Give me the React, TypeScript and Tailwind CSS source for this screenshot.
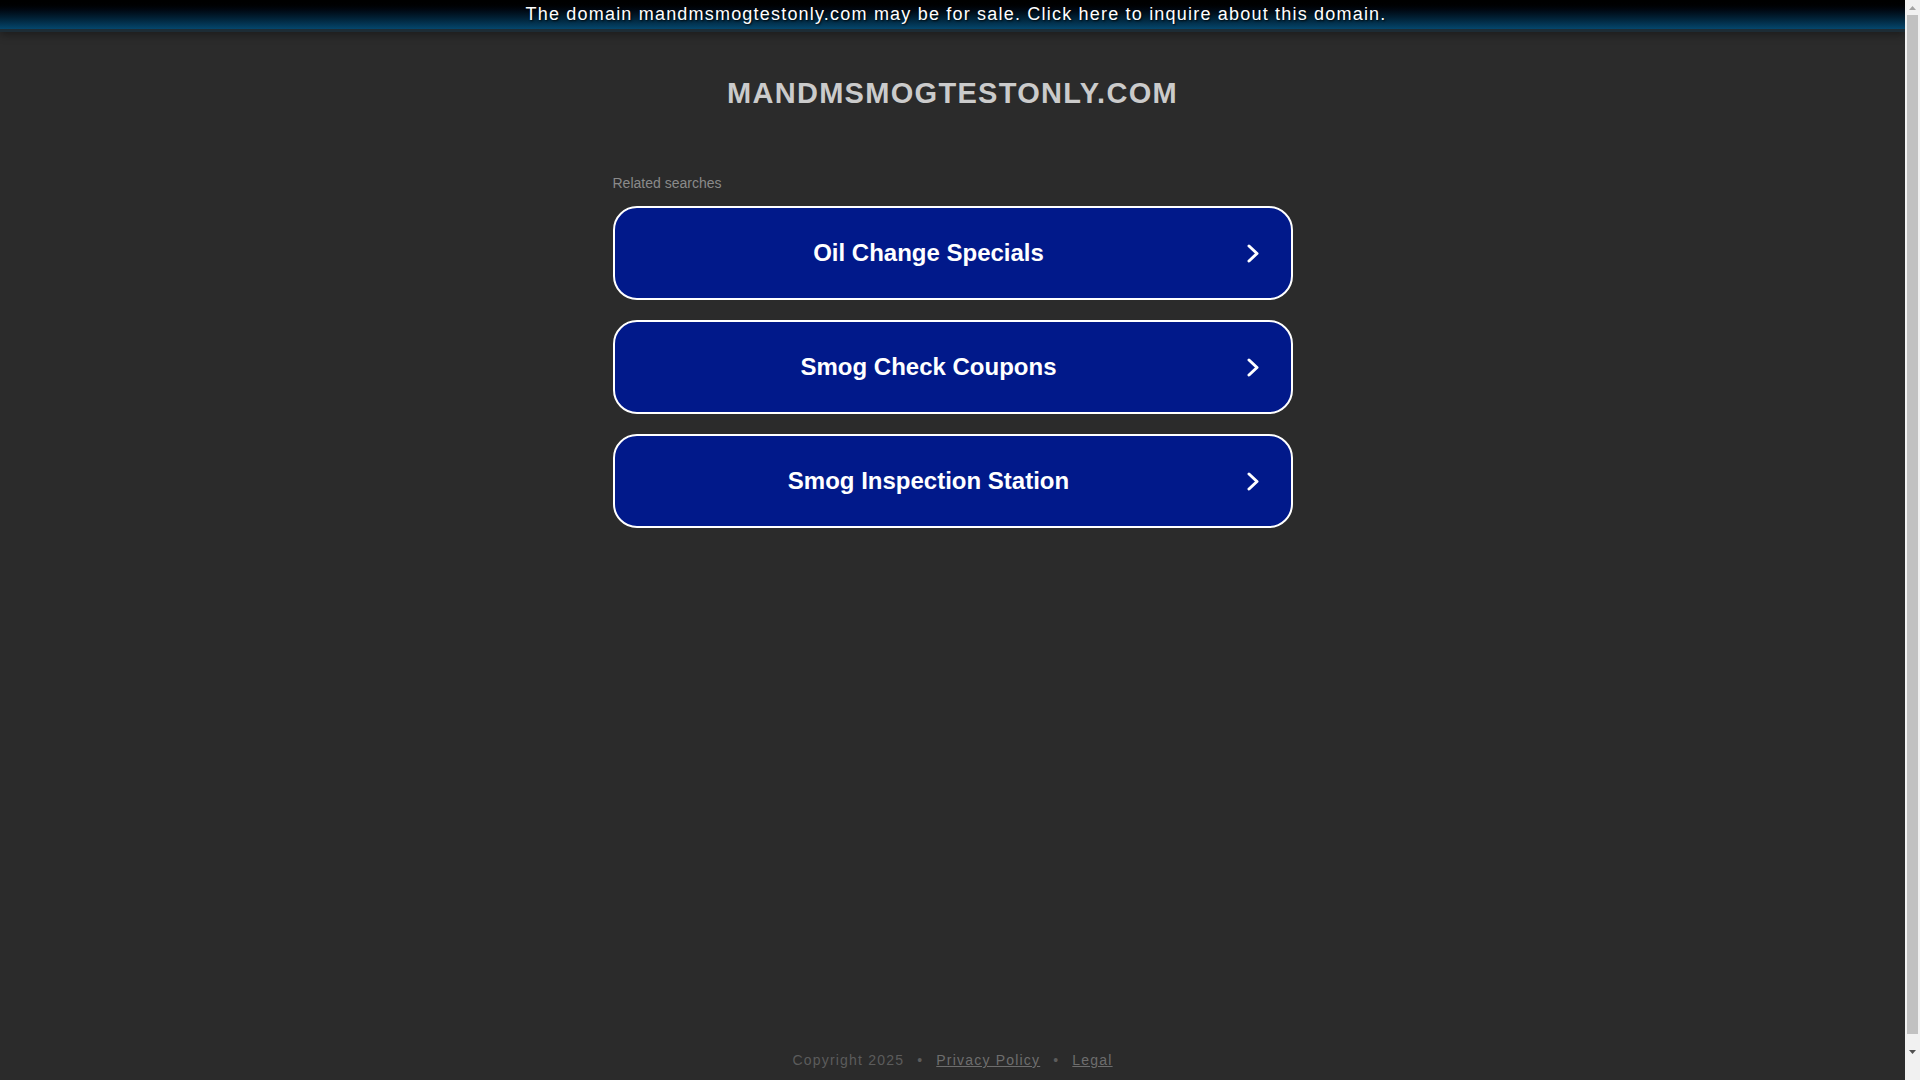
import React from "react";

const searches = ["Oil Change Specials", "Smog Check Coupons", "Smog Inspection Station"];

function Chevron() {
  return (
    <svg viewBox="0 0 12 19" className="w-[12px] h-[19px] ml-1 shrink-0" fill="none">
      <polyline
        points="2,2 10,9.5 2,17"
        stroke="white"
        strokeWidth="3"
        strokeLinecap="round"
        strokeLinejoin="round"
      />
    </svg>
  );
}

function Scrollbar() {
  return (
    <aside className="w-[15px] shrink-0 bg-[#f1f1f1] flex flex-col">
      <div className="h-[15px] flex items-center justify-center">
        <svg viewBox="0 0 7 4" className="w-[7px] h-[4px]">
          <polygon points="3.5,0 7,4 0,4" fill="#a3a3a3" />
        </svg>
      </div>
      <div className="h-[1019px] mx-[2px] bg-[#c1c1c1]" />
      <div className="h-[10px]" />
      <div className="h-[15px] flex items-center justify-center">
        <svg viewBox="0 0 7 4" className="w-[7px] h-[4px]">
          <polygon points="0,0 7,0 3.5,4" fill="#505050" />
        </svg>
      </div>
    </aside>
  );
}

export default function App() {
  return (
    <div className="h-[1080px] flex overflow-hidden font-['Liberation_Sans',Arial,sans-serif]">
      <main className="flex-1 bg-[#2b2b2b] flex flex-col">
        <a
          href="#"
          className="block h-[32px] pl-[7px] bg-gradient-to-b from-black to-[#05476d] border-b-[3px] border-[#1d2c35] shadow-[0_3px_8px_rgba(0,0,0,0.35)] text-center text-white text-[18px] leading-[28px] tracking-[1.2px] [text-shadow:1px_1px_2px_rgba(0,0,0,0.9)]"
        >
          The domain mandmsmogtestonly.com may be for sale. Click here to inquire about this domain.
        </a>

        <h1 className="mt-[43px] text-center text-[29px] leading-[36px] font-bold tracking-[1.3px] text-[#cbcbcb]">
          MANDMSMOGTESTONLY.COM
        </h1>

        <div className="w-[680px] mx-auto mt-[62px]">
          <p className="text-[14px] leading-[20px] text-[#8a8a8a]">Related searches</p>
          <div className="mt-[13px] flex flex-col gap-[20px]">
            {searches.map((s) => (
              <a
                key={s}
                href="#"
                className="h-[94px] flex items-center border-2 border-white rounded-[24px] bg-[#01198a] pr-[32px]"
              >
                <span className="flex-1 text-center text-white text-[24px] font-bold">{s}</span>
                <Chevron />
              </a>
            ))}
          </div>
        </div>

        <footer className="mt-auto pb-[10px] flex justify-center text-[14px] leading-[20px] tracking-[1.2px]">
          <span className="text-[#5c5c5c]">Copyright 2025</span>
          <span className="mx-[13px] text-[#5c5c5c]">•</span>
          <a href="#" className="underline text-[#6e6e6e]">Privacy Policy</a>
          <span className="mx-[13px] text-[#5c5c5c]">•</span>
          <a href="#" className="underline text-[#6e6e6e]">Legal</a>
        </footer>
      </main>
      <Scrollbar />
    </div>
  );
}
